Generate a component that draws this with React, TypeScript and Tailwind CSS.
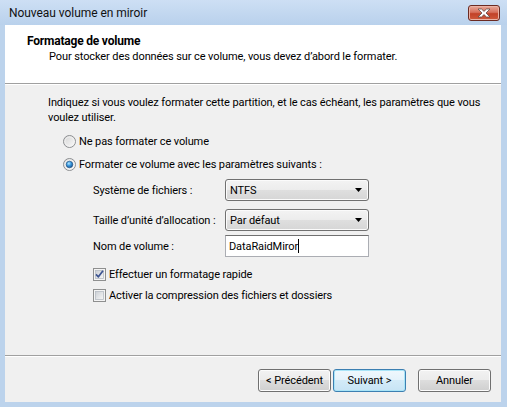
import React from "react";

function Radio({ checked }: { checked?: boolean }) {
  return (
    <svg width="13" height="13" viewBox="0 0 13 13" className="shrink-0">
      <defs>
        <linearGradient id={checked ? "rgA" : "rgB"} x1="0" y1="0" x2="1" y2="1">
          <stop offset="0" stopColor="#d4d4d4" />
          <stop offset="1" stopColor="#fbfbfb" />
        </linearGradient>
        <radialGradient id="dot" cx="0.4" cy="0.35" r="0.7">
          <stop offset="0" stopColor="#b8e8ff" />
          <stop offset="0.45" stopColor="#3c9be0" />
          <stop offset="1" stopColor="#164e8c" />
        </radialGradient>
      </defs>
      <circle cx="6.5" cy="6.5" r="6" fill={`url(#${checked ? "rgA" : "rgB"})`} stroke="#8c8e91" strokeWidth="1" />
      <circle cx="6.5" cy="6.5" r="4.6" fill="none" stroke="#f4f4f4" strokeWidth="0.8" />
      {checked && <circle cx="6.5" cy="6.5" r="3.3" fill="url(#dot)" stroke="#1d4f80" strokeWidth="0.6" />}
    </svg>
  );
}

function Check({ checked }: { checked?: boolean }) {
  return (
    <svg width="13" height="13" viewBox="0 0 13 13" className="shrink-0">
      <defs>
        <linearGradient id="cbg" x1="0" y1="0" x2="1" y2="1">
          <stop offset="0" stopColor="#cbcfd5" />
          <stop offset="1" stopColor="#f7f7f7" />
        </linearGradient>
      </defs>
      <rect x="0.5" y="0.5" width="12" height="12" fill="#f4f4f4" stroke="#8e8f8f" />
      <rect x="2.5" y="2.5" width="8" height="8" fill="url(#cbg)" stroke="#b6bcc4" strokeWidth="0.8" />
      {checked && (
        <path d="M3 6.3 L5.4 8.8 L10 2.8" fill="none" stroke="#3d5491" strokeWidth="1.7" strokeLinejoin="round" />
      )}
    </svg>
  );
}

function Combo({ value }: { value: string }) {
  return (
    <div className="w-[144px] h-[22px] rounded-[3px] border border-[#707070] bg-[linear-gradient(#f3f3f3_0%,#ececec_50%,#dfdfdf_50%,#d6d6d6_100%)] shadow-[inset_0_0_0_1px_#fbfbfb] flex items-center pl-[4px] pr-[6px]">
      <span className="flex-1">{value}</span>
      <svg width="7" height="4" viewBox="0 0 7 4">
        <path d="M0 0 H7 L3.5 4 Z" fill="#000" />
      </svg>
    </div>
  );
}

function Btn({ label, def }: { label: string; def?: boolean }) {
  return (
    <div
      className={
        def
          ? "w-[73px] h-[23px] rounded-[3px] border border-[#3c7fb1] bg-[linear-gradient(#eff8fd_0%,#e4f2fb_50%,#d3ebf8_50%,#c7e4f5_100%)] shadow-[inset_0_0_0_1px_#a8e4f7] flex items-center justify-center"
          : "w-[73px] h-[23px] rounded-[3px] border border-[#707070] bg-[linear-gradient(#f2f2f2_0%,#ebebeb_50%,#dddddd_50%,#cfcfcf_100%)] shadow-[inset_0_0_0_1px_#fcfcfc] flex items-center justify-center"
      }
    >
      {label}
    </div>
  );
}

export default function App() {
  return (
    <div
      className="w-[507px] h-[407px] bg-[#bcd3ec] flex flex-col text-[11px] leading-[15px] tracking-[-0.1px] text-black"
      style={{ fontFamily: "Roboto, 'Liberation Sans', sans-serif" }}
    >
      {/* Title bar */}
      <div className="h-[25px] shrink-0 flex items-start bg-[linear-gradient(#cddff4,#b9d1ec)]">
        <div className="pl-[9px] pt-[6px] text-[12px] tracking-[-0.05px] text-[#111]">Nouveau volume en miroir</div>
        <div className="ml-auto mr-[7px] mt-[5px] w-[32px] h-[16px] rounded-[3px] border border-[#6b2a22] bg-[linear-gradient(#e9a99a_0%,#d7705c_45%,#c24128_55%,#cf5a3c_100%)] shadow-[inset_0_0_0_1px_#eab3a6] flex items-center justify-center">
          <svg width="14" height="10" viewBox="0 0 14 10">
            <path
              d="M1 1 L4.5 1 L7 3.4 L9.5 1 L13 1 L9 5 L13 9 L9.5 9 L7 6.6 L4.5 9 L1 9 L5 5 Z"
              fill="#ffffff"
              stroke="#5e4b48"
              strokeWidth="0.8"
              strokeLinejoin="round"
            />
          </svg>
        </div>
      </div>

      {/* Client */}
      <div className="ml-[5px] mr-[6px] h-[377px] flex flex-col">
        {/* Header */}
        <div className="h-[58px] shrink-0 bg-white pl-[22px] pt-[9px]">
          <div className="font-bold text-[12px] tracking-[-0.2px]">Formatage de volume</div>
          <div className="pl-[22px]">Pour stocker des données sur ce volume, vous devez d’abord le formater.</div>
        </div>
        <div className="h-[2px] shrink-0 border-t border-[#a0a0a0] bg-white" />

        {/* Body */}
        <div className="h-[270px] shrink-0 bg-[#f0f0f0] pl-[43px] pt-[10px] flex flex-col">
          <div className="whitespace-nowrap">
            Indiquez si vous voulez formater cette partition, et le cas échéant, les paramètres que vous
            <br />
            voulez utiliser.
          </div>
          <div className="mt-[8px] ml-[15px] h-[17px] flex items-center gap-[3px]">
            <Radio />
            <span>Ne pas formater ce volume</span>
          </div>
          <div className="mt-[6px] ml-[15px] h-[17px] flex items-center gap-[3px]">
            <Radio checked />
            <span>Formater ce volume avec les paramètres suivants :</span>
          </div>

          <div className="ml-[45px] mt-[6px] flex flex-col">
            <div className="flex items-center">
              <span className="w-[132px] whitespace-nowrap">Système de fichiers :</span>
              <Combo value="NTFS" />
            </div>
            <div className="flex items-center mt-[8px]">
              <span className="w-[132px] whitespace-nowrap">Taille d’unité d’allocation :</span>
              <Combo value="Par défaut" />
            </div>
            <div className="flex items-center mt-[4px]">
              <span className="w-[132px] whitespace-nowrap">Nom de volume :</span>
              <div className="w-[144px] h-[22px] border border-[#abadb3] border-t-[#707070] bg-white flex items-center pl-[3px]">
                <span>DataRaidMiror</span>
                <span className="w-[1px] h-[14px] bg-black" />
              </div>
            </div>
            <div className="mt-[9px] h-[17px] flex items-center gap-[3px]">
              <Check checked />
              <span>Effectuer un formatage rapide</span>
            </div>
            <div className="mt-[4px] h-[17px] flex items-center gap-[3px]">
              <Check />
              <span>Activer la compression des fichiers et dossiers</span>
            </div>
          </div>
        </div>

        <div className="h-[2px] shrink-0 border-t border-[#a0a0a0] bg-white" />
        {/* Footer */}
        <div className="flex-1 bg-[#f0f0f0] flex justify-end items-start pt-[12px] pr-[10px]">
          <Btn label="< Précédent" />
          <div className="ml-[2px]">
            <Btn label="Suivant >" def />
          </div>
          <div className="ml-[12px]">
            <Btn label="Annuler" />
          </div>
        </div>
      </div>
    </div>
  );
}
